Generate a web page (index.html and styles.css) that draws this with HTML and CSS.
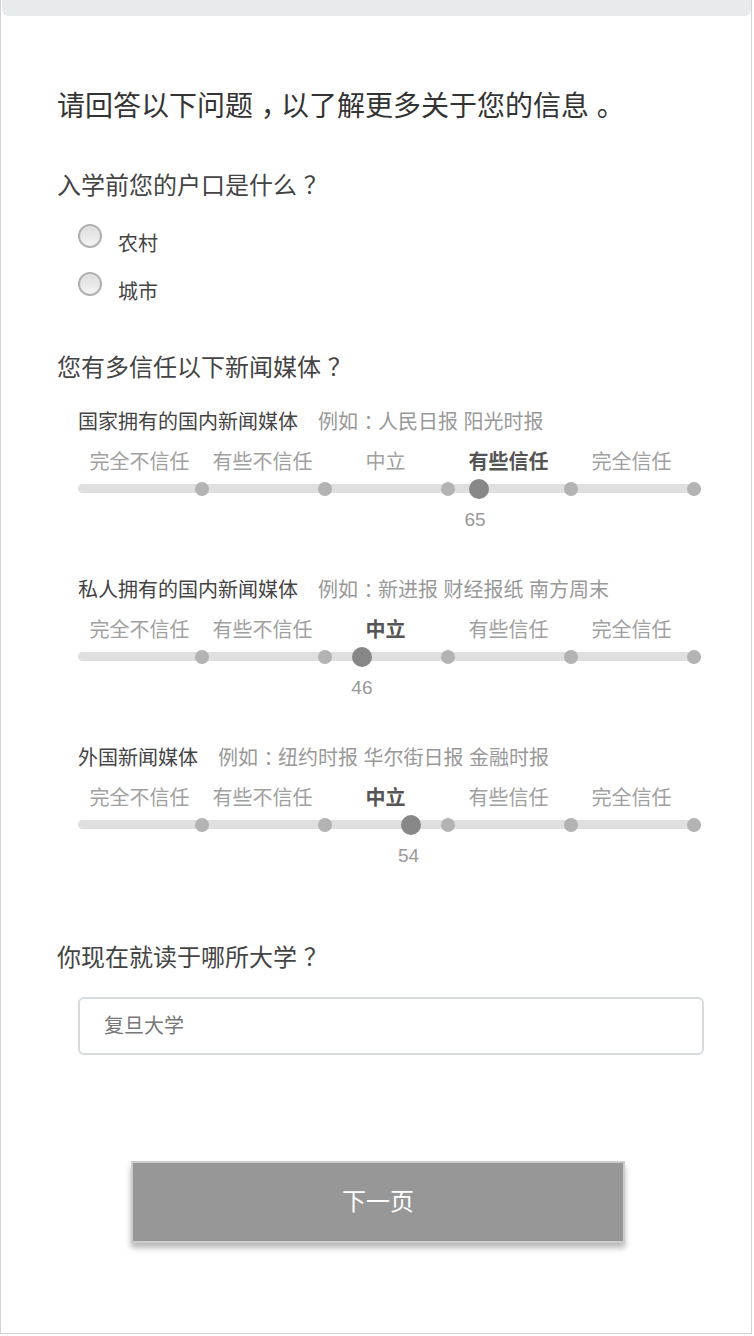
FILE: index.html
```html
<!DOCTYPE html>
<html lang="zh-CN">
<head>
<meta charset="utf-8">
<title>问卷</title>
<link rel="stylesheet" href="styles.css">
</head>
<body>
<div class="page">
  <div class="topbar"></div>
  <div class="content">
    <h1 class="title">请回答以下问题<span class="p">，</span>以了解更多关于您的信息<span class="p">。</span></h1>

    <div class="question">入学前您的户口是什么<span class="p">？</span></div>
    <div class="options">
      <label class="option"><span class="radio"></span><span class="opt-text">农村</span></label>
      <label class="option"><span class="radio"></span><span class="opt-text">城市</span></label>
    </div>

    <div class="question q2">您有多信任以下新闻媒体<span class="p">？</span></div>

    <div class="group">
      <div class="group-label">国家拥有的国内新闻媒体<span class="example">例如<span class="p">：</span>人民日报 阳光时报</span></div>
      <div class="scale">
        <span>完全不信任</span><span>有些不信任</span><span>中立</span><span class="active">有些信任</span><span>完全信任</span>
      </div>
      <div class="slider">
        <div class="track"></div>
        <div class="rail">
          <span class="tick t1"></span><span class="tick t2"></span><span class="tick t3"></span><span class="tick t4"></span><span class="tick t5"></span>
          <span class="handle" style="left:65%"></span>
        </div>
      </div>
      <div class="value-row"><span class="value" style="left:64.4%">65</span></div>
    </div>

    <div class="group">
      <div class="group-label">私人拥有的国内新闻媒体<span class="example">例如<span class="p">：</span>新进报 财经报纸 南方周末</span></div>
      <div class="scale">
        <span>完全不信任</span><span>有些不信任</span><span class="active">中立</span><span>有些信任</span><span>完全信任</span>
      </div>
      <div class="slider">
        <div class="track"></div>
        <div class="rail">
          <span class="tick t1"></span><span class="tick t2"></span><span class="tick t3"></span><span class="tick t4"></span><span class="tick t5"></span>
          <span class="handle" style="left:46%"></span>
        </div>
      </div>
      <div class="value-row"><span class="value" style="left:46%">46</span></div>
    </div>

    <div class="group">
      <div class="group-label">外国新闻媒体<span class="example">例如<span class="p">：</span>纽约时报 华尔街日报 金融时报</span></div>
      <div class="scale">
        <span>完全不信任</span><span>有些不信任</span><span class="active">中立</span><span>有些信任</span><span>完全信任</span>
      </div>
      <div class="slider">
        <div class="track"></div>
        <div class="rail">
          <span class="tick t1"></span><span class="tick t2"></span><span class="tick t3"></span><span class="tick t4"></span><span class="tick t5"></span>
          <span class="handle" style="left:54%"></span>
        </div>
      </div>
      <div class="value-row"><span class="value" style="left:53.6%">54</span></div>
    </div>

    <div class="question q3">你现在就读于哪所大学<span class="p">？</span></div>
    <div class="input">复旦大学</div>

    <div class="button">下一页</div>
  </div>
</div>
</body>
</html>
```

FILE: styles.css
```css
html, body {
  margin: 0;
  padding: 0;
  background: #ffffff;
}

body {
  font-family: "Liberation Sans", "Noto Sans CJK SC", sans-serif;
  color: #444;
}

/* full-width punctuation, centred in its cell as in the reference */
.p {
  font-feature-settings: "halt" 1;
  padding: 0 0.22em 0 0.28em;
}

.page {
  width: 752px;
  height: 1334px;
  box-sizing: border-box;
  border: 1px solid #d2d2d2;
  border-top: 0;
  overflow: hidden;
}

.topbar {
  height: 16px;
  margin: 0 0 0 1px;
  background: #e8ebee;
  border-radius: 0 0 6px 6px;
}

.content {
  padding-left: 56px;
}

.title {
  margin: 71px 0 0 0;
  font-size: 28px;
  line-height: 40px;
  font-weight: normal;
  color: #333;
}

.question {
  margin-top: 42px;
  font-size: 24px;
  line-height: 34px;
  color: #444;
}

.options {
  margin-top: 17px;
  padding-left: 21px;
  display: flex;
  flex-direction: column;
}

.option {
  display: flex;
  align-items: flex-start;
  height: 48px;
}

.radio {
  width: 20px;
  height: 20px;
  margin-top: 4px;
  border: 2px solid #b0b0b0;
  border-radius: 50%;
  background: linear-gradient(#dcdcdc, #f4f4f4);
  box-shadow: inset 0 1px 1px rgba(255,255,255,0.6);
  flex: none;
}

.opt-text {
  margin-left: 16px;
  font-size: 20px;
  line-height: 48px;
  color: #444;
}

.q2 {
  margin-top: 35px;
}

.group {
  margin-top: 43px;
  padding-left: 21px;
}

.q2 + .group {
  margin-top: 22px;
}

.group-label {
  font-size: 20px;
  line-height: 30px;
  color: #444;
}

.example {
  margin-left: 20px;
  color: #999;
}

.scale {
  margin-top: 10px;
  display: grid;
  grid-template-columns: repeat(5, 123px);
  font-size: 20px;
  line-height: 30px;
  color: #a0a0a0;
  text-align: center;
}

.scale .active {
  color: #555;
  font-weight: bold;
}

.slider {
  position: relative;
  width: 623px;
  height: 24px;
}

.track {
  position: absolute;
  left: 0;
  right: 0;
  top: 7px;
  height: 9px;
  border-radius: 5px;
  background: #dfdfdf;
}

.rail {
  position: absolute;
  left: 1px;
  width: 615px;
  top: 0;
  bottom: 0;
}

.tick {
  position: absolute;
  top: 50%;
  width: 14px;
  height: 14px;
  border-radius: 50%;
  background: #b3b3b3;
  transform: translate(-50%, -50%);
}

.t1 { left: 20%; }
.t2 { left: 40%; }
.t3 { left: 60%; }
.t4 { left: 80%; }
.t5 { left: 100%; }

.handle {
  position: absolute;
  top: 50%;
  width: 20px;
  height: 20px;
  border-radius: 50%;
  background: #878787;
  transform: translate(-50%, -50%);
}

.value-row {
  position: relative;
  margin-top: 5px;
  margin-left: 1px;
  width: 615px;
  height: 26px;
}

.value {
  position: absolute;
  top: 1px;
  transform: translateX(-50%);
  font-size: 19px;
  line-height: 26px;
  color: #999;
}

.q3 {
  margin-top: 73px;
}

.input {
  margin: 22px 0 0 21px;
  width: 626px;
  height: 58px;
  box-sizing: border-box;
  border: 2px solid #d7dbde;
  border-radius: 6px;
  padding-left: 24px;
  font-size: 20px;
  line-height: 54px;
  color: #777;
}

.button {
  margin: 106px 0 0 74px;
  width: 494px;
  height: 82px;
  box-sizing: border-box;
  border: 2px solid #cdcdcd;
  background: #979797;
  box-shadow: 0 5px 6px rgba(0, 0, 0, 0.28);
  color: #ffffff;
  font-size: 24px;
  line-height: 78px;
  text-align: center;
}
```
